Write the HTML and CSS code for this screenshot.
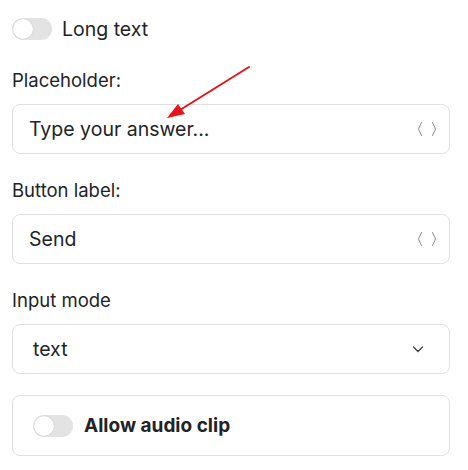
FILE: index.html
```html
<!DOCTYPE html>
<html>
<head>
<meta charset="utf-8">
<link rel="stylesheet" href="styles.css">
</head>
<body>
<div class="panel">
  <div class="toggle-row">
    <span class="switch"><span class="knob"></span></span>
    <span class="toggle-label">Long text</span>
  </div>

  <div class="field">
    <div class="label">Placeholder:</div>
    <div class="input">
      <span class="value">Type your answer...</span>
      <svg class="braces" width="20" height="16" viewBox="0 0 20 16"><path d="M4.5 1.5 L1.5 8 L4.5 14.5 M15.5 1.5 L18.5 8 L15.5 14.5" fill="none" stroke="#8c8c8c" stroke-width="1" stroke-linecap="round" stroke-linejoin="round"/></svg>
    </div>
  </div>

  <div class="field">
    <div class="label">Button label:</div>
    <div class="input">
      <span class="value">Send</span>
      <svg class="braces" width="20" height="16" viewBox="0 0 20 16"><path d="M4.5 1.5 L1.5 8 L4.5 14.5 M15.5 1.5 L18.5 8 L15.5 14.5" fill="none" stroke="#8c8c8c" stroke-width="1" stroke-linecap="round" stroke-linejoin="round"/></svg>
    </div>
  </div>

  <div class="field">
    <div class="label">Input mode</div>
    <div class="input select">
      <span class="value">text</span>
      <svg class="chevron" width="14" height="14" viewBox="0 0 14 14"><path d="M2.5 5 L7 9.5 L11.5 5" fill="none" stroke="#444" stroke-width="1.4" stroke-linecap="round" stroke-linejoin="round"/></svg>
    </div>
  </div>

  <div class="card">
    <span class="switch"><span class="knob"></span></span>
    <span class="card-label">Allow audio clip</span>
  </div>
</div>
<svg class="arrow" width="468" height="470" viewBox="0 0 468 470">
  <line x1="249" y1="67" x2="180" y2="110" stroke="#e8141b" stroke-width="2" stroke-linecap="round"/>
  <polygon points="167,118 178,104 185,114" fill="#e8141b"/>
</svg>
</body>
</html>
```
FILE: styles.css
```css
html, body {
  margin: 0;
  padding: 0;
  background: #ffffff;
}
body {
  font-family: Inter, "Open Sans", sans-serif;
  color: #222326;
  position: relative;
  width: 468px;
  height: 470px;
  overflow: hidden;
}
.panel {
  padding: 17px 18px 0 12px;
  display: flex;
  flex-direction: column;
}
.toggle-row {
  display: flex;
  align-items: center;
  gap: 10px;
  height: 24px;
  margin-bottom: 27px;
}
.switch {
  width: 40px;
  height: 22px;
  border-radius: 11px;
  background: #e3e3e3;
  position: relative;
  flex: none;
}
.knob {
  position: absolute;
  left: 1px;
  top: 1px;
  width: 20px;
  height: 20px;
  border-radius: 50%;
  background: #fff;
  box-shadow: 0 0 1px rgba(0,0,0,0.25);
}
.toggle-label {
  font-size: 19.5px;
  line-height: 24px;
}
.field {
  display: flex;
  flex-direction: column;
  margin-bottom: 24px;
}
.label {
  font-size: 18.5px;
  line-height: 24px;
  margin-bottom: 12px;
}
.input {
  height: 50px;
  box-sizing: border-box;
  border: 1px solid #e1e1e1;
  border-radius: 8px;
  display: flex;
  align-items: center;
  justify-content: space-between;
  padding: 0 12px 0 16px;
}
.value {
  font-size: 19.5px;
}
.braces {
  display: block;
}
.select {
  padding: 0 24px 0 20px;
}
.chevron {
  display: block;
}
.card {
  margin-top: -3px;
  height: 61px;
  box-sizing: border-box;
  border: 1px solid #e1e1e1;
  border-radius: 8px;
  display: flex;
  align-items: center;
  gap: 11px;
  padding: 0 20px;
}
.card-label {
  font-size: 19px;
  font-weight: 700;
}
.arrow {
  position: absolute;
  left: 0;
  top: 0;
  pointer-events: none;
}
```
